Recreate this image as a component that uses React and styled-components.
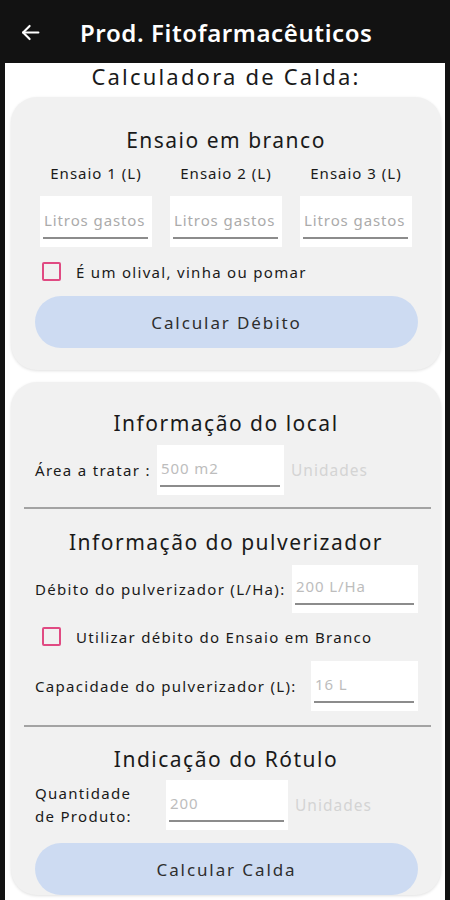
import React from "react";
import styled, { createGlobalStyle } from "styled-components";

const GlobalStyle = createGlobalStyle`
  html, body {
    margin: 0;
    padding: 0;
    background: #121212;
    font-family: "Noto Sans", "DejaVu Sans", sans-serif;
  }
  * { box-sizing: border-box; }
`;

const Screen = styled.div`
  width: 450px;
  height: 900px;
  display: flex;
  flex-direction: column;
  background: #121212;
  overflow: hidden;
`;

const TopBar = styled.header`
  height: 63px;
  flex-shrink: 0;
  display: flex;
  align-items: center;
  padding: 2px 0 0 20px;
  color: #fff;
`;

const BackBtn = styled.button`
  border: none;
  background: transparent;
  padding: 0;
  width: 21px;
  height: 21px;
  display: flex;
  color: #fff;
`;

const Title = styled.h1`
  margin: 0 0 0 39px;
  font-size: 24px;
  font-weight: 600;
  letter-spacing: 0.6px;
`;

const Panel = styled.main`
  flex: 1;
  margin: 0 5px;
  background: #fff;
  padding: 0 4px 0 6px;
  display: flex;
  flex-direction: column;
`;

const PageTitle = styled.h2`
  margin: 0;
  height: 34px;
  line-height: 26px;
  text-align: center;
  font-size: 22px;
  font-weight: 400;
  letter-spacing: 2.2px;
  color: #1a1a1a;
`;

const Card = styled.section`
  background: #f1f1f1;
  border-radius: 26px;
  box-shadow: 0 1px 3px rgba(0, 0, 0, 0.12);
  padding: ${({ pad }) => pad};
  margin-top: ${({ gap }) => gap || "0"};
  display: flex;
  flex-direction: column;
`;

const CardTitle = styled.h3`
  margin: ${({ top }) => top || 0}px 0 0;
  text-align: center;
  font-size: 21px;
  font-weight: 400;
  letter-spacing: 1.5px;
  color: #1a1a1a;
  line-height: 26px;
`;

const TrialGrid = styled.div`
  display: grid;
  grid-template-columns: repeat(3, 112px);
  column-gap: 18px;
  justify-content: center;
  margin-top: 10px;
`;

const TrialLabel = styled.div`
  text-align: center;
  font-size: 15px;
  letter-spacing: 1px;
  color: #1a1a1a;
  line-height: 20px;
  margin-bottom: 13px;
  white-space: nowrap;
`;

const Field = styled.div`
  background: #fff;
  width: ${({ w }) => w}px;
  height: ${({ h }) => h || 51}px;
  padding: 0 4px 8px 3px;
  display: flex;
  align-items: flex-end;
  flex-shrink: 0;
`;

const Input = styled.input`
  width: 100%;
  min-width: 0;
  border: none;
  border-bottom: 2px solid #8c8c8c;
  background: transparent;
  font-family: "Noto Sans", sans-serif;
  font-size: 15px;
  letter-spacing: 0.9px;
  padding: 0 0 7px 1px;
  outline: none;
  color: #333;
  &::placeholder {
    color: ${({ faint }) => (faint ? "#bdbdbd" : "#ababab")};
  }
`;

const CheckRow = styled.label`
  display: flex;
  align-items: center;
  height: 19px;
  gap: 15px;
  padding-left: 31px;
  margin-top: ${({ top }) => top || 0}px;
  font-size: 15px;
  letter-spacing: 1.3px;
  color: #1a1a1a;
  white-space: nowrap;
`;

const Box = styled.span`
  width: 19px;
  height: 19px;
  border: 2px solid #e04a82;
  border-radius: 2px;
  flex-shrink: 0;
`;

const ActionButton = styled.button`
  margin: ${({ top }) => top}px 23px 0 24px;
  height: 52px;
  flex-shrink: 0;
  border: none;
  border-radius: 26px;
  background: #cddbf2;
  font-family: "Noto Sans", sans-serif;
  font-size: 17px;
  letter-spacing: 1.9px;
  color: #2e2e2e;
`;

const Row = styled.div`
  display: flex;
  align-items: center;
  padding-left: 24px;
  margin-top: ${({ top }) => top || 0}px;
  gap: 7px;
`;

const RowLabel = styled.span`
  font-size: 15px;
  letter-spacing: 1.3px;
  color: #1a1a1a;
  line-height: 23px;
  width: ${({ w }) => w}px;
  flex-shrink: 0;
  white-space: nowrap;
`;

const Unit = styled.span`
  font-size: 15.5px;
  letter-spacing: 1px;
  color: #d4d4d4;
`;

const Divider = styled.hr`
  border: none;
  height: 2px;
  flex-shrink: 0;
  background: #a3a3a3;
  margin: ${({ top }) => top}px 10px 0 13px;
`;

function ArrowLeft() {
  return (
    <svg width="21" height="21" viewBox="0 0 24 24" fill="none" stroke="currentColor" strokeWidth="2.4" strokeLinecap="round" strokeLinejoin="round">
      <path d="M21 12H3.5" />
      <path d="M11 4.5 3.5 12l7.5 7.5" />
    </svg>
  );
}

export default function App() {
  return (
    <Screen>
      <GlobalStyle />
      <TopBar>
        <BackBtn type="button"><ArrowLeft /></BackBtn>
        <Title>Prod. Fitofarmacêuticos</Title>
      </TopBar>
      <Panel>
        <PageTitle>Calculadora de Calda:</PageTitle>

        <Card pad="30px 0 22px">
          <CardTitle>Ensaio em branco</CardTitle>
          <TrialGrid>
            {[1, 2, 3].map((n) => (
              <div key={n}>
                <TrialLabel>Ensaio {n} (L)</TrialLabel>
                <Field w={112}>
                  <Input placeholder="Litros gastos" />
                </Field>
              </div>
            ))}
          </TrialGrid>
          <CheckRow top={15}>
            <Box />
            É um olival, vinha ou pomar
          </CheckRow>
          <ActionButton top={15}>Calcular Débito</ActionButton>
        </Card>

        <Card gap="12px" pad="28px 0 0">
          <CardTitle>Informação do local</CardTitle>
          <Row top={9}>
            <RowLabel w={115}>Área a tratar :</RowLabel>
            <Field w={127} h={50}>
              <Input faint placeholder="500 m2" />
            </Field>
            <Unit>Unidades</Unit>
          </Row>
          <Divider top={12} />
          <CardTitle top={20}>Informação do pulverizador</CardTitle>
          <Row top={10}>
            <RowLabel w={250}>Débito do pulverizador (L/Ha):</RowLabel>
            <Field w={126} h={48}>
              <Input faint placeholder="200 L/Ha" />
            </Field>
          </Row>
          <CheckRow top={14}>
            <Box />
            Utilizar débito do Ensaio em Branco
          </CheckRow>
          <Row top={15}>
            <RowLabel w={269}>Capacidade do pulverizador (L):</RowLabel>
            <Field w={107} h={50}>
              <Input faint placeholder="16 L" />
            </Field>
          </Row>
          <Divider top={14} />
          <CardTitle top={19}>Indicação do Rótulo</CardTitle>
          <Row top={8}>
            <RowLabel w={124}>Quantidade<br />de Produto:</RowLabel>
            <Field w={122} h={50}>
              <Input faint placeholder="200" />
            </Field>
            <Unit>Unidades</Unit>
          </Row>
          <ActionButton top={13}>Calcular Calda</ActionButton>
        </Card>
      </Panel>
    </Screen>
  );
}
